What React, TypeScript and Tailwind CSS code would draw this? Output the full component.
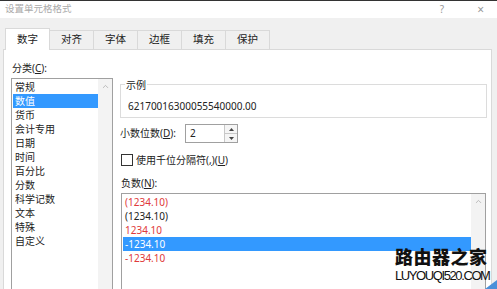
import { ChevronUp } from "lucide-react"

const categories = ["常规", "数值", "货币", "会计专用", "日期", "时间", "百分比", "分数", "科学记数", "文本", "特殊", "自定义"]

const negatives = [
  { text: "(1234.10)", red: true },
  { text: "(1234.10)", red: false },
  { text: "1234.10", red: true },
  { text: "-1234.10", red: false, selected: true },
  { text: "-1234.10", red: true },
]

const tabs = ["数字", "对齐", "字体", "边框", "填充", "保护"]

export default function App() {
  return (
    <div className="relative flex h-[289px] w-[497px] flex-col overflow-hidden border-t border-[#333] bg-[#f0f0f0] font-['Noto_Sans','Noto_Sans_CJK_SC',sans-serif] text-[10px] text-[#222]">
      {/* title bar */}
      <div className="flex h-[17px] items-center bg-white">
        <span className="ml-[5px] text-[9.5px] text-[#aaa]">设置单元格格式</span>
        <span className="ml-auto mr-[33px] text-[10px] text-[#999]">?</span>
        <span className="mr-[13px] text-[12px] leading-none text-[#999]">×</span>
      </div>

      {/* tabs */}
      <div className="flex h-[31px] items-end pl-[5px]">
        {tabs.map((t, i) =>
          i === 0 ? (
            <div
              key={t}
              className="relative z-10 -mb-px flex h-[22px] w-[45px] items-center justify-center border border-b-0 border-[#d9d9d9] bg-white text-[10.5px]"
            >
              {t}
            </div>
          ) : (
            <div
              key={t}
              className="-ml-px flex h-[19px] w-[45px] items-center justify-center border border-b-0 border-[#d9d9d9] bg-[#f0f0f0] text-[10.5px]"
            >
              {t}
            </div>
          )
        )}
      </div>

      {/* panel */}
      <div className="ml-[3px] flex w-[489px] flex-1 border border-b-0 border-[#d9d9d9] bg-white pl-[7px]">
        {/* category list */}
        <div className="flex w-[102px] flex-col">
          <div className="mt-[11px] h-[14px] pl-[1px] leading-[14px]">
            分类(<span className="underline">C</span>):
          </div>
          <div className="mt-[3px] flex flex-1 border border-b-0 border-[#a0a0a0]">
            <div className="flex-1 pt-[1px]">
              {categories.map((c, i) => (
                <div
                  key={c}
                  className={
                    i === 1
                      ? "ml-[1px] h-[14px] bg-[#3399ff] pl-[2px] leading-[14px] text-white"
                      : "h-[14px] pl-[3px] leading-[14px]"
                  }
                >
                  {c}
                </div>
              ))}
            </div>
            <div className="flex w-[14px] justify-center bg-[#f3f3f3] pt-[3px]">
              <ChevronUp className="h-[9px] w-[9px] text-[#aaa]" strokeWidth={2} />
            </div>
          </div>
        </div>

        {/* right side */}
        <div className="ml-[7px] flex w-[367px] flex-col">
          <div className="mt-[34px] flex h-[34px] flex-col border border-[#dcdcdc]">
            <span className="-mt-[7px] ml-[4px] h-[14px] self-start bg-white px-[1px] leading-[14px]">示例</span>
            <span className="ml-[7px] mt-[7px] h-[14px] leading-[14px]">62170016300055540000.00</span>
          </div>

          <div className="mt-[6px] flex h-[19px] items-center">
            <span className="w-[65px]">
              小数位数(<span className="underline">D</span>):
            </span>
            <div className="flex h-[19px] w-[53px] border border-[#a0a0a0]">
              <span className="flex-1 pl-[4px] leading-[17px]">2</span>
              <div className="flex w-[13px] flex-col border-l border-[#c8c8c8] bg-[#f5f5f5]">
                <div className="flex flex-1 items-center justify-center border-b border-[#c8c8c8]">
                  <svg width="5" height="3" viewBox="0 0 5 3">
                    <path d="M0 3 L2.5 0 L5 3 Z" fill="#444" />
                  </svg>
                </div>
                <div className="flex flex-1 items-center justify-center">
                  <svg width="5" height="3" viewBox="0 0 5 3">
                    <path d="M0 0 L2.5 3 L5 0 Z" fill="#444" />
                  </svg>
                </div>
              </div>
            </div>
          </div>

          <div className="mt-[11px] flex h-[12px] items-center gap-[3px]">
            <div className="ml-[1px] h-[12px] w-[12px] border border-[#333] bg-white" />
            <span>
              使用千位分隔符(<span className="underline">,</span>)(<span className="underline">U</span>)
            </span>
          </div>

          <div className="ml-[1px] mt-[10px] h-[14px] leading-[14px]">
            负数(<span className="underline">N</span>):
          </div>

          <div className="ml-[1px] mr-[1px] mt-[3px] flex flex-1 border border-b-0 border-[#a0a0a0]">
            <div className="flex-1 pt-[1px]">
              {negatives.map((n, i) => (
                <div
                  key={i}
                  className={
                    n.selected
                      ? "ml-[1px] h-[14px] bg-[#3399ff] pl-[2px] leading-[14px] text-white"
                      : n.red
                        ? "h-[14px] pl-[3px] leading-[14px] text-[#e0393a]"
                        : "h-[14px] pl-[3px] leading-[14px] text-[#222]"
                  }
                >
                  {n.text}
                </div>
              ))}
            </div>
            <div className="flex w-[14px] justify-center bg-[#f3f3f3] pt-[3px]">
              <ChevronUp className="h-[9px] w-[9px] text-[#aaa]" strokeWidth={2} />
            </div>
          </div>
        </div>
      </div>

      {/* watermark */}
      <div className="absolute left-[395px] top-[247px] flex flex-col">
        <span className="text-[18px] font-black leading-[18px] tracking-[0.5px] text-[#111]">路由器之家</span>
        <span className="mt-[4px] font-['Liberation_Sans',sans-serif] text-[13px] leading-[12px] tracking-[-1.4px] text-[#111]">
          LUYOUQI520.COM
        </span>
      </div>
      <svg className="absolute bottom-0 right-0" width="12" height="9" viewBox="0 0 12 9">
        <path d="M12 0 L12 9 L0 9 Z" fill="#4a90d9" />
      </svg>
    </div>
  )
}
